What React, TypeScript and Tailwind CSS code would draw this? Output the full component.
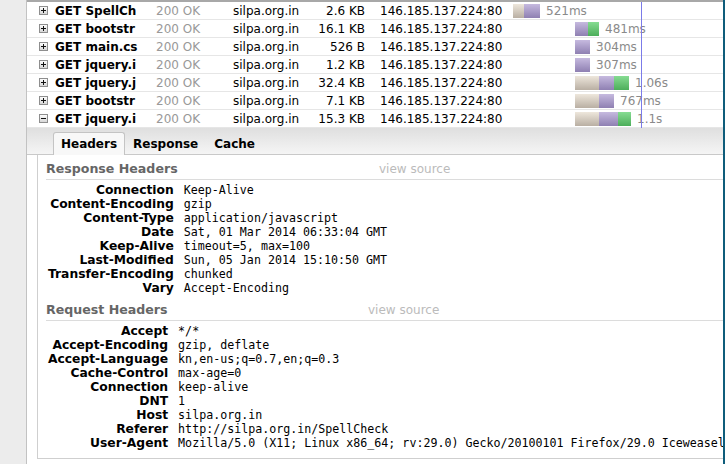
import React from 'react';

type NetRequest = {
  name: string;
  size: string;
  offset: number;
  tan: number;
  purple: number;
  green: number;
  time: string;
};

const requests: NetRequest[] = [
  { name: 'GET SpellCh', size: '2.6 KB', offset: 0, tan: 11, purple: 16, green: 0, time: '521ms' },
  { name: 'GET bootstr', size: '16.1 KB', offset: 62, tan: 0, purple: 13, green: 11, time: '481ms' },
  { name: 'GET main.cs', size: '526 B', offset: 62, tan: 0, purple: 15, green: 0, time: '304ms' },
  { name: 'GET jquery.i', size: '1.2 KB', offset: 62, tan: 0, purple: 15, green: 0, time: '307ms' },
  { name: 'GET jquery.j', size: '32.4 KB', offset: 62, tan: 24, purple: 15, green: 15, time: '1.06s' },
  { name: 'GET bootstr', size: '7.1 KB', offset: 62, tan: 24, purple: 15, green: 0, time: '767ms' },
  { name: 'GET jquery.i', size: '15.3 KB', offset: 62, tan: 24, purple: 19, green: 13, time: '1.1s' },
];

const responseHeaders: [string, string][] = [
  ['Connection', 'Keep-Alive'],
  ['Content-Encoding', 'gzip'],
  ['Content-Type', 'application/javascript'],
  ['Date', 'Sat, 01 Mar 2014 06:33:04 GMT'],
  ['Keep-Alive', 'timeout=5, max=100'],
  ['Last-Modified', 'Sun, 05 Jan 2014 15:10:50 GMT'],
  ['Transfer-Encoding', 'chunked'],
  ['Vary', 'Accept-Encoding'],
];

const requestHeaders: [string, string][] = [
  ['Accept', '*/*'],
  ['Accept-Encoding', 'gzip, deflate'],
  ['Accept-Language', 'kn,en-us;q=0.7,en;q=0.3'],
  ['Cache-Control', 'max-age=0'],
  ['Connection', 'keep-alive'],
  ['DNT', '1'],
  ['Host', 'silpa.org.in'],
  ['Referer', 'http://silpa.org.in/SpellCheck'],
  ['User-Agent', 'Mozilla/5.0 (X11; Linux x86_64; rv:29.0) Gecko/20100101 Firefox/29.0 Iceweasel'],
];

// small +/- toggle box like the old firebug twisty
const Twisty = ({ open }: { open: boolean }) => (
  <svg width="9" height="9" viewBox="0 0 9 9" className="shrink-0">
    <defs>
      <linearGradient id={open ? 'tw-o' : 'tw-c'} x1="0" y1="0" x2="0" y2="1">
        <stop offset="0" stopColor="#ffffff" />
        <stop offset="1" stopColor="#d4d4d4" />
      </linearGradient>
    </defs>
    <rect x="0.5" y="0.5" width="8" height="8" fill={`url(#${open ? 'tw-o' : 'tw-c'})`} stroke="#8e8e8e" />
    <line x1="2" y1="4.5" x2="7" y2="4.5" stroke="#111" />
    {!open && <line x1="4.5" y1="2" x2="4.5" y2="7" stroke="#111" />}
  </svg>
);

const HeaderSection = ({
  title,
  titleWidth,
  labelWidth,
  rows,
  className,
}: {
  title: string;
  titleWidth: string;
  labelWidth: string;
  rows: [string, string][];
  className?: string;
}) => (
  <div className={className}>
    <div className="flex items-center leading-[16px] pb-[2px] border-b border-[#dcdcdc]">
      <span className={`${titleWidth} shrink-0 font-bold text-[12.6px] text-[#666]`}>{title}</span>
      <span className="text-[12px] text-[#bbb]">view source</span>
    </div>
    <table className="mt-[3px] ml-[2px] border-collapse">
      <tbody>
        {rows.map(([k, v], i) => (
          <tr key={i} className="h-[14px] leading-[14px]">
            <td className={`${labelWidth} text-right font-bold text-[12.3px] text-black whitespace-nowrap pr-[10px] p-0`}>
              {k}
            </td>
            <td className="font-['DejaVu_Sans_Mono',monospace] text-[11.65px] text-black whitespace-nowrap p-0">
              {v}
            </td>
          </tr>
        ))}
      </tbody>
    </table>
  </div>
);

export default function App() {
  return (
    <div className="w-[725px] h-[464px] overflow-hidden flex bg-white font-['DejaVu_Sans',sans-serif]">
      {/* left gutter */}
      <div className="w-[27px] shrink-0 bg-[#ececec] border-r border-[#c2c2c2]" />

      <div className="flex-1 min-w-0 flex flex-col overflow-hidden">
        <div className="h-[2px] bg-[#a8a8a8] shrink-0" />

        {/* request rows */}
        <div className="relative shrink-0">
          {requests.map((r, i) => (
            <div key={i} className="h-[18px] border-b border-[#e6e6e6] flex items-center text-[12px] whitespace-nowrap">
              <div className="w-[28px] pl-[12px] flex items-center">
                <Twisty open={i === requests.length - 1} />
              </div>
              <div className="w-[101px] font-bold text-black overflow-hidden">{r.name}</div>
              <div className="w-[77px] text-[#999]">200 OK</div>
              <div className="w-[77px] text-black">silpa.org.in</div>
              <div className="w-[55px] text-right text-black">{r.size}</div>
              <div className="w-[148px] pl-[15px] text-black">146.185.137.224:80</div>
              <div className="flex-1 flex items-center">
                <div className="flex h-[14px]" style={{ marginLeft: r.offset }}>
                  {r.tan > 0 && (
                    <div className="h-full bg-gradient-to-b from-[#eee7dc] to-[#b9afa3]" style={{ width: r.tan }} />
                  )}
                  <div className="h-full bg-gradient-to-b from-[#c6badf] to-[#8f80b2]" style={{ width: r.purple }} />
                  {r.green > 0 && (
                    <div className="h-full bg-gradient-to-b from-[#86dc92] to-[#4cae5a]" style={{ width: r.green }} />
                  )}
                </div>
                <span className="ml-[6px] text-[#8a8a8a]">{r.time}</span>
              </div>
            </div>
          ))}
          {/* window load marker */}
          <div className="absolute top-0 bottom-0 left-[614px] w-px bg-[#7b7be8]" />
        </div>

        {/* tab strip */}
        <div className="h-[27px] shrink-0 bg-gradient-to-b from-[#dfdfdf] to-[#f5f5f5] border-b border-[#c9c9c9] flex items-end pl-[26px]">
          <div className="h-[23px] -mb-px px-[7px] flex items-center border border-b-0 border-[#c4c4c4] rounded-t-[3px] bg-[#f8f8f8] font-bold text-[12px] text-black">
            Headers
          </div>
          <div className="h-[23px] -mb-px px-[7px] flex items-center border border-transparent font-bold text-[12px] text-black">
            Response
          </div>
          <div className="h-[23px] -mb-px px-[7px] flex items-center border border-transparent font-bold text-[12px] text-black">
            Cache
          </div>
        </div>

        {/* headers panel */}
        <div className="pl-[10px] shrink-0">
          <div className="border-l border-b border-[#cfcfcf] pl-[8px] pt-[6px] pb-[8px] overflow-hidden">
            <HeaderSection title="Response Headers" titleWidth="w-[333px]" labelWidth="w-[127px]" rows={responseHeaders} />
            <HeaderSection
              title="Request Headers"
              titleWidth="w-[322px]"
              labelWidth="w-[122px]"
              rows={requestHeaders}
              className="mt-[7px]"
            />
          </div>
        </div>
      </div>

      {/* window frame edge */}
      <div className="w-[2px] shrink-0 bg-[#0f5d7b]" />
    </div>
  );
}
